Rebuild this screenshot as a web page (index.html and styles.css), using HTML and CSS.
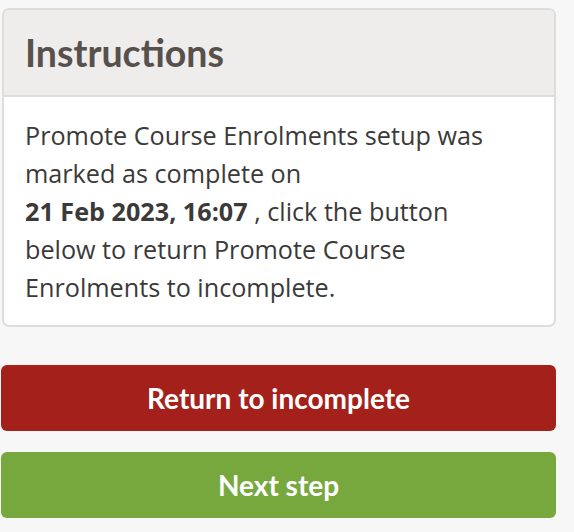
FILE: index.html
```html
<!DOCTYPE html>
<html lang="en">
<head>
<meta charset="utf-8">
<title>Instructions</title>
<link rel="stylesheet" href="styles.css">
</head>
<body>
<div class="page">
  <section class="card">
    <header class="card-header">
      <h2 class="card-title">Instructions</h2>
    </header>
    <div class="card-body">
      <p class="card-text">Promote Course Enrolments setup was marked as complete on<br><strong>21 Feb 2023, 16:07</strong> , click the button below to return Promote Course Enrolments to incomplete.</p>
    </div>
  </section>
  <div class="actions">
    <button class="btn btn-red" type="button">Return to incomplete</button>
    <button class="btn btn-green" type="button">Next step</button>
  </div>
</div>
</body>
</html>
```
FILE: styles.css
```css
html, body {
  margin: 0;
  padding: 0;
  background: #f7f7f7;
}
body {
  font-family: "Open Sans", "Liberation Sans", sans-serif;
  color: #3b3a39;
}
.page {
  width: 555px;
  padding: 8px 0 0 1px;
}
.card {
  margin-left: 1px;
  width: 554px;
  box-sizing: border-box;
  background: #ffffff;
  border: 2px solid #dedddc;
  border-radius: 7px;
  overflow: hidden;
}
.card-header {
  background: #eeedeb;
  border-bottom: 2px solid #dedddc;
  height: 87px;
  box-sizing: border-box;
  display: flex;
  align-items: center;
  padding: 0 21px;
}
.card-title {
  margin: 0;
  font-family: "Lato", "Liberation Sans", sans-serif;
  font-size: 37.5px;
  font-weight: 700;
  color: #57504d;
  line-height: 1;
}
.card-body {
  padding: 19px 40px 19px 21px;
}
.card-text {
  margin: 0;
  font-size: 25.2px;
  line-height: 38px;
}
.card-text strong {
  font-weight: 700;
}
.actions {
  display: flex;
  flex-direction: column;
  gap: 21px;
  margin-top: 38px;
}
.btn {
  display: block;
  width: 555px;
  height: 66px;
  border: 0;
  border-radius: 6px;
  color: #ffffff;
  font-family: "Lato", "Liberation Sans", sans-serif;
  font-size: 28px;
  font-weight: 700;
  cursor: pointer;
}
.btn-red {
  background: #a3211a;
}
.btn-green {
  background: #77a83e;
}
```
